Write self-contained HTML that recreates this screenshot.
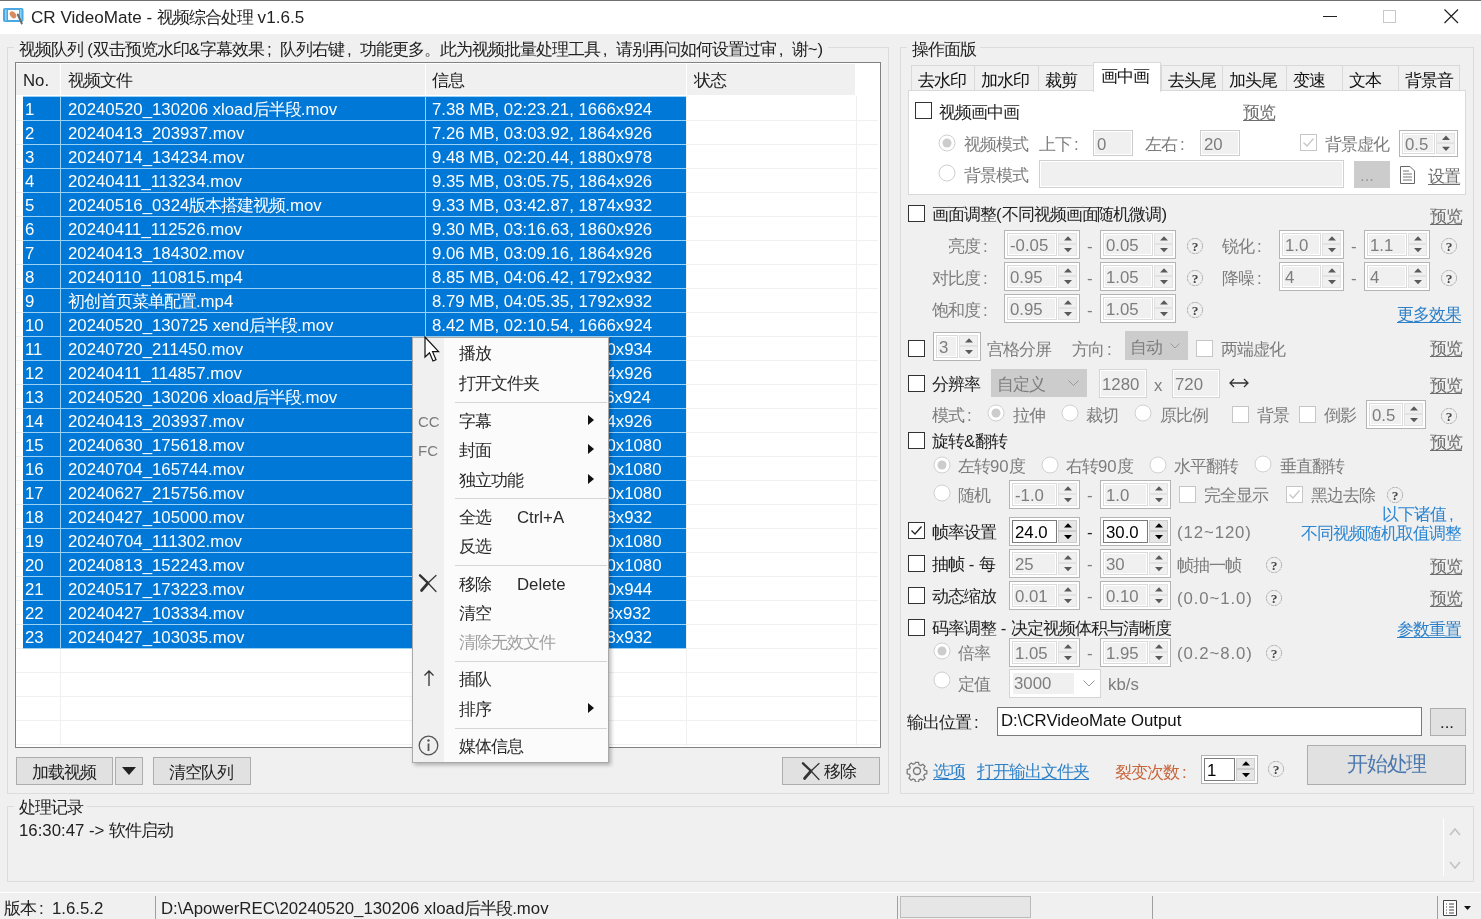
<!DOCTYPE html><html><head><meta charset="utf-8"><style>
html,body{margin:0;padding:0}
body{width:1481px;height:919px;overflow:hidden;position:relative;background:#f0f0f0;font-family:"Liberation Sans",sans-serif;font-size:16.8px;color:#1a1a1a}
.c{font-size:1.012em;letter-spacing:-0.0595em}
.k{display:inline-block;width:16px;padding-left:3px;box-sizing:border-box;letter-spacing:0}
.t{position:absolute;white-space:nowrap;line-height:20px;height:20px}
.b{position:absolute;box-sizing:content-box}
.u{text-decoration:underline;text-underline-offset:2px}
.d{color:#7d7d7d}
.w{color:#fff}
.btn{position:absolute;box-sizing:border-box;border:1px solid #adadad;background:#e1e1e1}
</style></head><body><div id="root" style="position:absolute;left:0;top:0;width:1481px;height:919px;will-change:transform">

<div class="b" style="left:0px;top:0px;width:1481px;height:34px;background:#fff"></div>
<div class="b" style="left:0px;top:0px;width:1481px;height:1px;background:#6f6f6f"></div>
<svg class="b" style="left:0px;top:4px" width="30" height="24"><rect x="3" y="4" width="20.5" height="14" rx="2" fill="#4ba7e3"/><rect x="5" y="5.5" width="1.6" height="11" fill="#86d3f6"/><rect x="20" y="5.5" width="1.6" height="11" fill="#86d3f6"/><rect x="8" y="6" width="11" height="10" fill="#f7fcff"/><ellipse cx="13" cy="10.8" rx="3.9" ry="2.7" transform="rotate(50 13 10.8)" fill="#d98a5e"/><path d="M17.8 10.5L21.8 19.5" stroke="#6a6a6a" stroke-width="1.9" stroke-linecap="round"/></svg>
<div class="t " style="left:31px;top:7px;color:#222;font-size:17.1px">CR VideoMate - <span class="c">视频综合处理</span> v1.6.5</div>
<div class="b" style="left:1323px;top:16px;width:14px;height:1px;background:#222"></div>
<div class="b" style="left:1383px;top:10px;width:11px;height:11px;border:1px solid #c8c8c8"></div>
<svg class="b" style="left:1444px;top:9px" width="15" height="15"><path d="M0.5 0.5L14 14M14 0.5L0.5 14" stroke="#222" stroke-width="1.2"/></svg>
<div class="b" style="left:7px;top:47px;width:880px;height:745px;border:1px solid #dcdcdc"></div>
<div class="t " style="left:14px;top:40px;background:#f0f0f0;color:#222">&nbsp;<span class="c">视频队列</span> (<span class="c">双击预览水印</span>&amp;<span class="c">字幕效果<span class="k">;</span>队列右键<span class="k">,</span>功能更多。此为视频批量处理工具<span class="k">,</span>请别再问如何设置过审<span class="k">,</span>谢</span>~)&nbsp;</div>
<div class="b" style="left:15px;top:62px;width:864px;height:684px;border:1px solid #828282;background:#fff"></div>
<div class="b" style="left:16px;top:64px;width:839px;height:31px;background:#f0f0f0"></div>
<div class="b" style="left:60px;top:63px;width:1px;height:33px;background:#fff"></div>
<div class="b" style="left:425px;top:63px;width:1px;height:33px;background:#fff"></div>
<div class="b" style="left:686px;top:63px;width:1px;height:33px;background:#fff"></div>
<div class="t " style="left:23px;top:71px;color:#222">No.</div>
<div class="t " style="left:68px;top:71px;color:#222"><span class="c">视频文件</span></div>
<div class="t " style="left:432px;top:71px;color:#222"><span class="c">信息</span></div>
<div class="t " style="left:694px;top:71px;color:#222"><span class="c">状态</span></div>
<div class="b" style="left:16px;top:120px;width:862px;height:1px;background:#f0f0f0"></div>
<div class="b" style="left:16px;top:144px;width:862px;height:1px;background:#f0f0f0"></div>
<div class="b" style="left:16px;top:168px;width:862px;height:1px;background:#f0f0f0"></div>
<div class="b" style="left:16px;top:192px;width:862px;height:1px;background:#f0f0f0"></div>
<div class="b" style="left:16px;top:216px;width:862px;height:1px;background:#f0f0f0"></div>
<div class="b" style="left:16px;top:240px;width:862px;height:1px;background:#f0f0f0"></div>
<div class="b" style="left:16px;top:264px;width:862px;height:1px;background:#f0f0f0"></div>
<div class="b" style="left:16px;top:288px;width:862px;height:1px;background:#f0f0f0"></div>
<div class="b" style="left:16px;top:312px;width:862px;height:1px;background:#f0f0f0"></div>
<div class="b" style="left:16px;top:336px;width:862px;height:1px;background:#f0f0f0"></div>
<div class="b" style="left:16px;top:360px;width:862px;height:1px;background:#f0f0f0"></div>
<div class="b" style="left:16px;top:384px;width:862px;height:1px;background:#f0f0f0"></div>
<div class="b" style="left:16px;top:408px;width:862px;height:1px;background:#f0f0f0"></div>
<div class="b" style="left:16px;top:432px;width:862px;height:1px;background:#f0f0f0"></div>
<div class="b" style="left:16px;top:456px;width:862px;height:1px;background:#f0f0f0"></div>
<div class="b" style="left:16px;top:480px;width:862px;height:1px;background:#f0f0f0"></div>
<div class="b" style="left:16px;top:504px;width:862px;height:1px;background:#f0f0f0"></div>
<div class="b" style="left:16px;top:528px;width:862px;height:1px;background:#f0f0f0"></div>
<div class="b" style="left:16px;top:552px;width:862px;height:1px;background:#f0f0f0"></div>
<div class="b" style="left:16px;top:576px;width:862px;height:1px;background:#f0f0f0"></div>
<div class="b" style="left:16px;top:600px;width:862px;height:1px;background:#f0f0f0"></div>
<div class="b" style="left:16px;top:624px;width:862px;height:1px;background:#f0f0f0"></div>
<div class="b" style="left:16px;top:648px;width:862px;height:1px;background:#f0f0f0"></div>
<div class="b" style="left:16px;top:672px;width:862px;height:1px;background:#f0f0f0"></div>
<div class="b" style="left:16px;top:696px;width:862px;height:1px;background:#f0f0f0"></div>
<div class="b" style="left:16px;top:720px;width:862px;height:1px;background:#f0f0f0"></div>
<div class="b" style="left:16px;top:744px;width:862px;height:1px;background:#f0f0f0"></div>
<div class="b" style="left:60px;top:96px;width:1px;height:650px;background:#f0f0f0"></div>
<div class="b" style="left:425px;top:96px;width:1px;height:650px;background:#f0f0f0"></div>
<div class="b" style="left:686px;top:96px;width:1px;height:650px;background:#f0f0f0"></div>
<div class="b" style="left:856px;top:96px;width:1px;height:650px;background:#f0f0f0"></div>
<div class="b" style="left:23px;top:96px;width:663px;height:24px;background:#0078d7"></div>
<div class="b" style="left:23px;top:96px;width:663px;height:1px;background:#99d1f5"></div>
<div class="b" style="left:60px;top:96px;width:1px;height:24px;background:#99d1f5"></div>
<div class="b" style="left:425px;top:96px;width:1px;height:24px;background:#99d1f5"></div>
<div class="t w" style="left:25px;top:100px;">1</div>
<div class="t w" style="left:68px;top:100px;">20240520_130206 xload<span class="c">后半段</span>.mov</div>
<div class="t w" style="left:432px;top:100px;">7.38 MB, 02:23.21, 1666x924</div>
<div class="b" style="left:23px;top:120px;width:663px;height:24px;background:#0078d7"></div>
<div class="b" style="left:23px;top:120px;width:663px;height:1px;background:#99d1f5"></div>
<div class="b" style="left:60px;top:120px;width:1px;height:24px;background:#99d1f5"></div>
<div class="b" style="left:425px;top:120px;width:1px;height:24px;background:#99d1f5"></div>
<div class="t w" style="left:25px;top:124px;">2</div>
<div class="t w" style="left:68px;top:124px;">20240413_203937.mov</div>
<div class="t w" style="left:432px;top:124px;">7.26 MB, 03:03.92, 1864x926</div>
<div class="b" style="left:23px;top:144px;width:663px;height:24px;background:#0078d7"></div>
<div class="b" style="left:23px;top:144px;width:663px;height:1px;background:#99d1f5"></div>
<div class="b" style="left:60px;top:144px;width:1px;height:24px;background:#99d1f5"></div>
<div class="b" style="left:425px;top:144px;width:1px;height:24px;background:#99d1f5"></div>
<div class="t w" style="left:25px;top:148px;">3</div>
<div class="t w" style="left:68px;top:148px;">20240714_134234.mov</div>
<div class="t w" style="left:432px;top:148px;">9.48 MB, 02:20.44, 1880x978</div>
<div class="b" style="left:23px;top:168px;width:663px;height:24px;background:#0078d7"></div>
<div class="b" style="left:23px;top:168px;width:663px;height:1px;background:#99d1f5"></div>
<div class="b" style="left:60px;top:168px;width:1px;height:24px;background:#99d1f5"></div>
<div class="b" style="left:425px;top:168px;width:1px;height:24px;background:#99d1f5"></div>
<div class="t w" style="left:25px;top:172px;">4</div>
<div class="t w" style="left:68px;top:172px;">20240411_113234.mov</div>
<div class="t w" style="left:432px;top:172px;">9.35 MB, 03:05.75, 1864x926</div>
<div class="b" style="left:23px;top:192px;width:663px;height:24px;background:#0078d7"></div>
<div class="b" style="left:23px;top:192px;width:663px;height:1px;background:#99d1f5"></div>
<div class="b" style="left:60px;top:192px;width:1px;height:24px;background:#99d1f5"></div>
<div class="b" style="left:425px;top:192px;width:1px;height:24px;background:#99d1f5"></div>
<div class="t w" style="left:25px;top:196px;">5</div>
<div class="t w" style="left:68px;top:196px;">20240516_0324<span class="c">版本搭建视频</span>.mov</div>
<div class="t w" style="left:432px;top:196px;">9.33 MB, 03:42.87, 1874x932</div>
<div class="b" style="left:23px;top:216px;width:663px;height:24px;background:#0078d7"></div>
<div class="b" style="left:23px;top:216px;width:663px;height:1px;background:#99d1f5"></div>
<div class="b" style="left:60px;top:216px;width:1px;height:24px;background:#99d1f5"></div>
<div class="b" style="left:425px;top:216px;width:1px;height:24px;background:#99d1f5"></div>
<div class="t w" style="left:25px;top:220px;">6</div>
<div class="t w" style="left:68px;top:220px;">20240411_112526.mov</div>
<div class="t w" style="left:432px;top:220px;">9.30 MB, 03:16.63, 1860x926</div>
<div class="b" style="left:23px;top:240px;width:663px;height:24px;background:#0078d7"></div>
<div class="b" style="left:23px;top:240px;width:663px;height:1px;background:#99d1f5"></div>
<div class="b" style="left:60px;top:240px;width:1px;height:24px;background:#99d1f5"></div>
<div class="b" style="left:425px;top:240px;width:1px;height:24px;background:#99d1f5"></div>
<div class="t w" style="left:25px;top:244px;">7</div>
<div class="t w" style="left:68px;top:244px;">20240413_184302.mov</div>
<div class="t w" style="left:432px;top:244px;">9.06 MB, 03:09.16, 1864x926</div>
<div class="b" style="left:23px;top:264px;width:663px;height:24px;background:#0078d7"></div>
<div class="b" style="left:23px;top:264px;width:663px;height:1px;background:#99d1f5"></div>
<div class="b" style="left:60px;top:264px;width:1px;height:24px;background:#99d1f5"></div>
<div class="b" style="left:425px;top:264px;width:1px;height:24px;background:#99d1f5"></div>
<div class="t w" style="left:25px;top:268px;">8</div>
<div class="t w" style="left:68px;top:268px;">20240110_110815.mp4</div>
<div class="t w" style="left:432px;top:268px;">8.85 MB, 04:06.42, 1792x932</div>
<div class="b" style="left:23px;top:288px;width:663px;height:24px;background:#0078d7"></div>
<div class="b" style="left:23px;top:288px;width:663px;height:1px;background:#99d1f5"></div>
<div class="b" style="left:60px;top:288px;width:1px;height:24px;background:#99d1f5"></div>
<div class="b" style="left:425px;top:288px;width:1px;height:24px;background:#99d1f5"></div>
<div class="t w" style="left:25px;top:292px;">9</div>
<div class="t w" style="left:68px;top:292px;"><span class="c">初创首页菜单配置</span>.mp4</div>
<div class="t w" style="left:432px;top:292px;">8.79 MB, 04:05.35, 1792x932</div>
<div class="b" style="left:23px;top:312px;width:663px;height:24px;background:#0078d7"></div>
<div class="b" style="left:23px;top:312px;width:663px;height:1px;background:#99d1f5"></div>
<div class="b" style="left:60px;top:312px;width:1px;height:24px;background:#99d1f5"></div>
<div class="b" style="left:425px;top:312px;width:1px;height:24px;background:#99d1f5"></div>
<div class="t w" style="left:25px;top:316px;">10</div>
<div class="t w" style="left:68px;top:316px;">20240520_130725 xend<span class="c">后半段</span>.mov</div>
<div class="t w" style="left:432px;top:316px;">8.42 MB, 02:10.54, 1666x924</div>
<div class="b" style="left:23px;top:336px;width:663px;height:24px;background:#0078d7"></div>
<div class="b" style="left:23px;top:336px;width:663px;height:1px;background:#99d1f5"></div>
<div class="b" style="left:60px;top:336px;width:1px;height:24px;background:#99d1f5"></div>
<div class="b" style="left:425px;top:336px;width:1px;height:24px;background:#99d1f5"></div>
<div class="t w" style="left:25px;top:340px;">11</div>
<div class="t w" style="left:68px;top:340px;">20240720_211450.mov</div>
<div class="t w" style="left:432px;top:340px;">8.31 MB, 02:45.12, 1680x934</div>
<div class="b" style="left:23px;top:360px;width:663px;height:24px;background:#0078d7"></div>
<div class="b" style="left:23px;top:360px;width:663px;height:1px;background:#99d1f5"></div>
<div class="b" style="left:60px;top:360px;width:1px;height:24px;background:#99d1f5"></div>
<div class="b" style="left:425px;top:360px;width:1px;height:24px;background:#99d1f5"></div>
<div class="t w" style="left:25px;top:364px;">12</div>
<div class="t w" style="left:68px;top:364px;">20240411_114857.mov</div>
<div class="t w" style="left:432px;top:364px;">8.20 MB, 03:01.08, 1864x926</div>
<div class="b" style="left:23px;top:384px;width:663px;height:24px;background:#0078d7"></div>
<div class="b" style="left:23px;top:384px;width:663px;height:1px;background:#99d1f5"></div>
<div class="b" style="left:60px;top:384px;width:1px;height:24px;background:#99d1f5"></div>
<div class="b" style="left:425px;top:384px;width:1px;height:24px;background:#99d1f5"></div>
<div class="t w" style="left:25px;top:388px;">13</div>
<div class="t w" style="left:68px;top:388px;">20240520_130206 xload<span class="c">后半段</span>.mov</div>
<div class="t w" style="left:432px;top:388px;">8.11 MB, 02:23.21, 1666x924</div>
<div class="b" style="left:23px;top:408px;width:663px;height:24px;background:#0078d7"></div>
<div class="b" style="left:23px;top:408px;width:663px;height:1px;background:#99d1f5"></div>
<div class="b" style="left:60px;top:408px;width:1px;height:24px;background:#99d1f5"></div>
<div class="b" style="left:425px;top:408px;width:1px;height:24px;background:#99d1f5"></div>
<div class="t w" style="left:25px;top:412px;">14</div>
<div class="t w" style="left:68px;top:412px;">20240413_203937.mov</div>
<div class="t w" style="left:432px;top:412px;">8.05 MB, 03:03.92, 1864x926</div>
<div class="b" style="left:23px;top:432px;width:663px;height:24px;background:#0078d7"></div>
<div class="b" style="left:23px;top:432px;width:663px;height:1px;background:#99d1f5"></div>
<div class="b" style="left:60px;top:432px;width:1px;height:24px;background:#99d1f5"></div>
<div class="b" style="left:425px;top:432px;width:1px;height:24px;background:#99d1f5"></div>
<div class="t w" style="left:25px;top:436px;">15</div>
<div class="t w" style="left:68px;top:436px;">20240630_175618.mov</div>
<div class="t w" style="left:432px;top:436px;">7.98 MB, 01:58.30, 1920x1080</div>
<div class="b" style="left:23px;top:456px;width:663px;height:24px;background:#0078d7"></div>
<div class="b" style="left:23px;top:456px;width:663px;height:1px;background:#99d1f5"></div>
<div class="b" style="left:60px;top:456px;width:1px;height:24px;background:#99d1f5"></div>
<div class="b" style="left:425px;top:456px;width:1px;height:24px;background:#99d1f5"></div>
<div class="t w" style="left:25px;top:460px;">16</div>
<div class="t w" style="left:68px;top:460px;">20240704_165744.mov</div>
<div class="t w" style="left:432px;top:460px;">7.91 MB, 02:12.47, 1920x1080</div>
<div class="b" style="left:23px;top:480px;width:663px;height:24px;background:#0078d7"></div>
<div class="b" style="left:23px;top:480px;width:663px;height:1px;background:#99d1f5"></div>
<div class="b" style="left:60px;top:480px;width:1px;height:24px;background:#99d1f5"></div>
<div class="b" style="left:425px;top:480px;width:1px;height:24px;background:#99d1f5"></div>
<div class="t w" style="left:25px;top:484px;">17</div>
<div class="t w" style="left:68px;top:484px;">20240627_215756.mov</div>
<div class="t w" style="left:432px;top:484px;">7.88 MB, 02:31.66, 1920x1080</div>
<div class="b" style="left:23px;top:504px;width:663px;height:24px;background:#0078d7"></div>
<div class="b" style="left:23px;top:504px;width:663px;height:1px;background:#99d1f5"></div>
<div class="b" style="left:60px;top:504px;width:1px;height:24px;background:#99d1f5"></div>
<div class="b" style="left:425px;top:504px;width:1px;height:24px;background:#99d1f5"></div>
<div class="t w" style="left:25px;top:508px;">18</div>
<div class="t w" style="left:68px;top:508px;">20240427_105000.mov</div>
<div class="t w" style="left:432px;top:508px;">7.80 MB, 03:22.15, 1868x932</div>
<div class="b" style="left:23px;top:528px;width:663px;height:24px;background:#0078d7"></div>
<div class="b" style="left:23px;top:528px;width:663px;height:1px;background:#99d1f5"></div>
<div class="b" style="left:60px;top:528px;width:1px;height:24px;background:#99d1f5"></div>
<div class="b" style="left:425px;top:528px;width:1px;height:24px;background:#99d1f5"></div>
<div class="t w" style="left:25px;top:532px;">19</div>
<div class="t w" style="left:68px;top:532px;">20240704_111302.mov</div>
<div class="t w" style="left:432px;top:532px;">7.74 MB, 02:05.09, 1920x1080</div>
<div class="b" style="left:23px;top:552px;width:663px;height:24px;background:#0078d7"></div>
<div class="b" style="left:23px;top:552px;width:663px;height:1px;background:#99d1f5"></div>
<div class="b" style="left:60px;top:552px;width:1px;height:24px;background:#99d1f5"></div>
<div class="b" style="left:425px;top:552px;width:1px;height:24px;background:#99d1f5"></div>
<div class="t w" style="left:25px;top:556px;">20</div>
<div class="t w" style="left:68px;top:556px;">20240813_152243.mov</div>
<div class="t w" style="left:432px;top:556px;">7.69 MB, 01:49.73, 1920x1080</div>
<div class="b" style="left:23px;top:576px;width:663px;height:24px;background:#0078d7"></div>
<div class="b" style="left:23px;top:576px;width:663px;height:1px;background:#99d1f5"></div>
<div class="b" style="left:60px;top:576px;width:1px;height:24px;background:#99d1f5"></div>
<div class="b" style="left:425px;top:576px;width:1px;height:24px;background:#99d1f5"></div>
<div class="t w" style="left:25px;top:580px;">21</div>
<div class="t w" style="left:68px;top:580px;">20240517_173223.mov</div>
<div class="t w" style="left:432px;top:580px;">7.61 MB, 02:40.28, 1880x944</div>
<div class="b" style="left:23px;top:600px;width:663px;height:24px;background:#0078d7"></div>
<div class="b" style="left:23px;top:600px;width:663px;height:1px;background:#99d1f5"></div>
<div class="b" style="left:60px;top:600px;width:1px;height:24px;background:#99d1f5"></div>
<div class="b" style="left:425px;top:600px;width:1px;height:24px;background:#99d1f5"></div>
<div class="t w" style="left:25px;top:604px;">22</div>
<div class="t w" style="left:68px;top:604px;">20240427_103334.mov</div>
<div class="t w" style="left:432px;top:604px;">7.55 MB, 03:11.90, 1868x932</div>
<div class="b" style="left:23px;top:624px;width:663px;height:24px;background:#0078d7"></div>
<div class="b" style="left:23px;top:624px;width:663px;height:1px;background:#99d1f5"></div>
<div class="b" style="left:60px;top:624px;width:1px;height:24px;background:#99d1f5"></div>
<div class="b" style="left:425px;top:624px;width:1px;height:24px;background:#99d1f5"></div>
<div class="t w" style="left:25px;top:628px;">23</div>
<div class="t w" style="left:68px;top:628px;">20240427_103035.mov</div>
<div class="t w" style="left:432px;top:628px;">7.50 MB, 03:08.44, 1868x932</div>
<div class="b" style="left:23px;top:648px;width:663px;height:1px;background:#99d1f5"></div>
<div class="btn" style="left:16px;top:757px;width:97px;height:28px"></div>
<div class="t " style="left:32px;top:763px;color:#222"><span class="c">加载视频</span></div>
<div class="btn" style="left:115px;top:757px;width:28px;height:28px"></div>
<svg class="b" style="left:122px;top:767px" width="14" height="9"><path d="M0 0H14L7 8Z" fill="#222"/></svg>
<div class="btn" style="left:153px;top:757px;width:98px;height:28px"></div>
<div class="t " style="left:169px;top:763px;color:#222"><span class="c">清空队列</span></div>
<div class="btn" style="left:782px;top:757px;width:98px;height:28px"></div>
<svg class="b" style="left:801px;top:761px" width="20" height="20"><g stroke="#333" stroke-linecap="round"><path d="M2 2.3L10 10" stroke-width="2.4"/><path d="M10 10L18 18.5" stroke-width="1.2"/><path d="M3.5 17.5L10 10" stroke-width="2.7"/><path d="M10 10L18 2.5" stroke-width="1.2"/></g></svg>
<div class="t " style="left:824px;top:762px;color:#222"><span class="c">移除</span></div>
<div class="b" style="left:900px;top:47px;width:572px;height:745px;border:1px solid #dcdcdc"></div>
<div class="t " style="left:907px;top:40px;background:#f0f0f0;color:#222">&nbsp;<span class="c">操作面版</span>&nbsp;</div>
<div class="b" style="left:908px;top:90px;width:556px;height:103px;border:1px solid #d9d9d9;background:#fff"></div>
<div class="b" style="left:911px;top:65px;width:62px;height:24px;border:1px solid #d9d9d9;border-bottom:none;background:#f0f0f0"></div>
<div class="t " style="left:918px;top:71px;color:#111"><span class="c">去水印</span></div>
<div class="b" style="left:974px;top:65px;width:63px;height:24px;border:1px solid #d9d9d9;border-bottom:none;background:#f0f0f0"></div>
<div class="t " style="left:981px;top:71px;color:#111"><span class="c">加水印</span></div>
<div class="b" style="left:1038px;top:65px;width:54px;height:24px;border:1px solid #d9d9d9;border-bottom:none;background:#f0f0f0"></div>
<div class="t " style="left:1045px;top:71px;color:#111"><span class="c">裁剪</span></div>
<div class="b" style="left:1161px;top:65px;width:60px;height:24px;border:1px solid #d9d9d9;border-bottom:none;background:#f0f0f0"></div>
<div class="t " style="left:1168px;top:71px;color:#111"><span class="c">去头尾</span></div>
<div class="b" style="left:1222px;top:65px;width:63px;height:24px;border:1px solid #d9d9d9;border-bottom:none;background:#f0f0f0"></div>
<div class="t " style="left:1229px;top:71px;color:#111"><span class="c">加头尾</span></div>
<div class="b" style="left:1286px;top:65px;width:55px;height:24px;border:1px solid #d9d9d9;border-bottom:none;background:#f0f0f0"></div>
<div class="t " style="left:1293px;top:71px;color:#111"><span class="c">变速</span></div>
<div class="b" style="left:1342px;top:65px;width:55px;height:24px;border:1px solid #d9d9d9;border-bottom:none;background:#f0f0f0"></div>
<div class="t " style="left:1349px;top:71px;color:#111"><span class="c">文本</span></div>
<div class="b" style="left:1398px;top:65px;width:60px;height:24px;border:1px solid #d9d9d9;border-bottom:none;background:#f0f0f0"></div>
<div class="t " style="left:1405px;top:71px;color:#111"><span class="c">背景音</span></div>
<div class="b" style="left:1093px;top:62px;width:66px;height:29px;border:1px solid #d9d9d9;border-bottom:none;background:#fff"></div>
<div class="t " style="left:1101px;top:67px;color:#111"><span class="c">画中画</span></div>
<div class="b" style="left:915px;top:102px;width:15px;height:15px;border:1px solid #333;background:#fff"></div>
<div class="t " style="left:939px;top:103px;color:#222"><span class="c">视频画中画</span></div>
<div class="t u" style="left:1243px;top:103px;color:#6d6d6d"><span class="c">预览</span></div>
<svg class="b" style="left:938px;top:134px" width="18" height="18"><circle cx="9" cy="9" r="8" fill="#fff" stroke="#cfcfcf" stroke-width="1"/><circle cx="9" cy="9" r="4.5" fill="#cccccc"/></svg>
<div class="t d" style="left:964px;top:135px;"><span class="c">视频模式</span></div>
<div class="t d" style="left:1039px;top:135px;"><span class="c">上下<span class="k">:</span></span></div>
<div class="b" style="left:1093px;top:130px;width:38px;height:24px;border:1px solid #cccccc;box-shadow:inset 0 0 0 1px #fff;background:#f0f0f0"></div>
<div class="t d" style="left:1097px;top:135px;">0</div>
<div class="t d" style="left:1145px;top:135px;"><span class="c">左右<span class="k">:</span></span></div>
<div class="b" style="left:1200px;top:130px;width:38px;height:24px;border:1px solid #cccccc;box-shadow:inset 0 0 0 1px #fff;background:#f0f0f0"></div>
<div class="t d" style="left:1204px;top:135px;">20</div>
<div class="b" style="left:1300px;top:134px;width:15px;height:15px;border:1px solid #c6c6c6;background:#fff"></div>
<svg class="b" style="left:1300px;top:134px" width="17" height="17"><path d="M3.5 8.5 L7 12 L13.5 4.5" fill="none" stroke="#c6c6c6" stroke-width="1.3"/></svg>
<div class="t d" style="left:1325px;top:135px;"><span class="c">背景虚化</span></div>
<div class="b" style="left:1399px;top:130px;width:57px;height:25px;border:1px solid #b4b4b4;background:#fff"></div>
<div class="b" style="left:1402px;top:133px;width:31px;height:19px;border:1px solid #dadada;box-shadow:inset 0 0 0 1px #fff;background:#f0f0f0"></div>
<div class="b" style="left:1436px;top:133px;width:17px;height:19px;border:1px solid #e2e2e2;background:#f0f0f0"></div>
<div class="b" style="left:1436px;top:142px;width:19px;height:2px;background:#e2e2e2"></div>
<svg class="b" style="left:1440.5px;top:133px" width="10" height="21"><path d="M1 6.9L5 2.6L9 6.9Z" fill="#5a5a5a"/><path d="M1 13.7L5 17.9L9 13.7Z" fill="#5a5a5a"/></svg>
<div class="t " style="left:1405px;top:135px;color:#7d7d7d">0.5</div>
<svg class="b" style="left:938px;top:164px" width="18" height="18"><circle cx="9" cy="9" r="8" fill="#fff" stroke="#cfcfcf" stroke-width="1"/></svg>
<div class="t d" style="left:964px;top:166px;"><span class="c">背景模式</span></div>
<div class="b" style="left:1039px;top:160px;width:303px;height:26px;border:1px solid #d0d0d0;box-shadow:inset 0 0 0 1px #fff;background:#f0f0f0"></div>
<div class="b" style="left:1354px;top:161px;width:36px;height:27px;background:#cccccc"></div>
<div class="t " style="left:1360px;top:166px;color:#999">...</div>
<svg class="b" style="left:1399px;top:165px" width="17" height="20"><path d="M1.5 1.5H11L15.5 6V18.5H1.5Z" fill="#fff" stroke="#666"/><path d="M4 6H10M4 9H13M4 12H13M4 15H13" stroke="#777"/></svg>
<div class="t u" style="left:1428px;top:167px;color:#6d6d6d"><span class="c">设置</span></div>
<div class="b" style="left:908px;top:205px;width:15px;height:15px;border:1px solid #333;background:#fff"></div>
<div class="t " style="left:932px;top:205px;color:#222"><span class="c">画面调整</span>(<span class="c">不同视频画面随机微调</span>)</div>
<div class="t u" style="left:1430px;top:207px;color:#6d6d6d"><span class="c">预览</span></div>
<div class="t d" style="left:948px;top:237px;"><span class="c">亮度<span class="k">:</span></span></div>
<div class="b" style="left:1004px;top:230px;width:74px;height:27px;border:1px solid #b4b4b4;background:#fff"></div>
<div class="b" style="left:1007px;top:233px;width:48px;height:21px;border:1px solid #dadada;box-shadow:inset 0 0 0 1px #fff;background:#f0f0f0"></div>
<div class="b" style="left:1058px;top:233px;width:17px;height:21px;border:1px solid #e2e2e2;background:#f0f0f0"></div>
<div class="b" style="left:1058px;top:243px;width:19px;height:2px;background:#e2e2e2"></div>
<svg class="b" style="left:1062.5px;top:233px" width="10" height="23"><path d="M1 7.6L5 3.3L9 7.6Z" fill="#5a5a5a"/><path d="M1 15.0L5 19.2L9 15.0Z" fill="#5a5a5a"/></svg>
<div class="t " style="left:1010px;top:236px;color:#7d7d7d">-0.05</div>
<div class="t d" style="left:1087px;top:237px;">-</div>
<div class="b" style="left:1100px;top:230px;width:74px;height:27px;border:1px solid #b4b4b4;background:#fff"></div>
<div class="b" style="left:1103px;top:233px;width:48px;height:21px;border:1px solid #dadada;box-shadow:inset 0 0 0 1px #fff;background:#f0f0f0"></div>
<div class="b" style="left:1154px;top:233px;width:17px;height:21px;border:1px solid #e2e2e2;background:#f0f0f0"></div>
<div class="b" style="left:1154px;top:243px;width:19px;height:2px;background:#e2e2e2"></div>
<svg class="b" style="left:1158.5px;top:233px" width="10" height="23"><path d="M1 7.6L5 3.3L9 7.6Z" fill="#5a5a5a"/><path d="M1 15.0L5 19.2L9 15.0Z" fill="#5a5a5a"/></svg>
<div class="t " style="left:1106px;top:236px;color:#7d7d7d">0.05</div>
<svg class="b" style="left:1186px;top:237px" width="18" height="18"><circle cx="9" cy="9" r="7.6" fill="none" stroke="#b0b0b0" stroke-width="1" stroke-dasharray="3.2 0.8"/><text x="9" y="14" text-anchor="middle" font-family="Liberation Serif" font-weight="bold" font-size="13.5" fill="#4a4a4a">?</text></svg>
<div class="t d" style="left:932px;top:269px;"><span class="c">对比度<span class="k">:</span></span></div>
<div class="b" style="left:1004px;top:262px;width:74px;height:27px;border:1px solid #b4b4b4;background:#fff"></div>
<div class="b" style="left:1007px;top:265px;width:48px;height:21px;border:1px solid #dadada;box-shadow:inset 0 0 0 1px #fff;background:#f0f0f0"></div>
<div class="b" style="left:1058px;top:265px;width:17px;height:21px;border:1px solid #e2e2e2;background:#f0f0f0"></div>
<div class="b" style="left:1058px;top:275px;width:19px;height:2px;background:#e2e2e2"></div>
<svg class="b" style="left:1062.5px;top:265px" width="10" height="23"><path d="M1 7.6L5 3.3L9 7.6Z" fill="#5a5a5a"/><path d="M1 15.0L5 19.2L9 15.0Z" fill="#5a5a5a"/></svg>
<div class="t " style="left:1010px;top:268px;color:#7d7d7d">0.95</div>
<div class="t d" style="left:1087px;top:269px;">-</div>
<div class="b" style="left:1100px;top:262px;width:74px;height:27px;border:1px solid #b4b4b4;background:#fff"></div>
<div class="b" style="left:1103px;top:265px;width:48px;height:21px;border:1px solid #dadada;box-shadow:inset 0 0 0 1px #fff;background:#f0f0f0"></div>
<div class="b" style="left:1154px;top:265px;width:17px;height:21px;border:1px solid #e2e2e2;background:#f0f0f0"></div>
<div class="b" style="left:1154px;top:275px;width:19px;height:2px;background:#e2e2e2"></div>
<svg class="b" style="left:1158.5px;top:265px" width="10" height="23"><path d="M1 7.6L5 3.3L9 7.6Z" fill="#5a5a5a"/><path d="M1 15.0L5 19.2L9 15.0Z" fill="#5a5a5a"/></svg>
<div class="t " style="left:1106px;top:268px;color:#7d7d7d">1.05</div>
<svg class="b" style="left:1186px;top:269px" width="18" height="18"><circle cx="9" cy="9" r="7.6" fill="none" stroke="#b0b0b0" stroke-width="1" stroke-dasharray="3.2 0.8"/><text x="9" y="14" text-anchor="middle" font-family="Liberation Serif" font-weight="bold" font-size="13.5" fill="#4a4a4a">?</text></svg>
<div class="t d" style="left:932px;top:301px;"><span class="c">饱和度<span class="k">:</span></span></div>
<div class="b" style="left:1004px;top:294px;width:74px;height:27px;border:1px solid #b4b4b4;background:#fff"></div>
<div class="b" style="left:1007px;top:297px;width:48px;height:21px;border:1px solid #dadada;box-shadow:inset 0 0 0 1px #fff;background:#f0f0f0"></div>
<div class="b" style="left:1058px;top:297px;width:17px;height:21px;border:1px solid #e2e2e2;background:#f0f0f0"></div>
<div class="b" style="left:1058px;top:307px;width:19px;height:2px;background:#e2e2e2"></div>
<svg class="b" style="left:1062.5px;top:297px" width="10" height="23"><path d="M1 7.6L5 3.3L9 7.6Z" fill="#5a5a5a"/><path d="M1 15.0L5 19.2L9 15.0Z" fill="#5a5a5a"/></svg>
<div class="t " style="left:1010px;top:300px;color:#7d7d7d">0.95</div>
<div class="t d" style="left:1087px;top:301px;">-</div>
<div class="b" style="left:1100px;top:294px;width:74px;height:27px;border:1px solid #b4b4b4;background:#fff"></div>
<div class="b" style="left:1103px;top:297px;width:48px;height:21px;border:1px solid #dadada;box-shadow:inset 0 0 0 1px #fff;background:#f0f0f0"></div>
<div class="b" style="left:1154px;top:297px;width:17px;height:21px;border:1px solid #e2e2e2;background:#f0f0f0"></div>
<div class="b" style="left:1154px;top:307px;width:19px;height:2px;background:#e2e2e2"></div>
<svg class="b" style="left:1158.5px;top:297px" width="10" height="23"><path d="M1 7.6L5 3.3L9 7.6Z" fill="#5a5a5a"/><path d="M1 15.0L5 19.2L9 15.0Z" fill="#5a5a5a"/></svg>
<div class="t " style="left:1106px;top:300px;color:#7d7d7d">1.05</div>
<svg class="b" style="left:1186px;top:301px" width="18" height="18"><circle cx="9" cy="9" r="7.6" fill="none" stroke="#b0b0b0" stroke-width="1" stroke-dasharray="3.2 0.8"/><text x="9" y="14" text-anchor="middle" font-family="Liberation Serif" font-weight="bold" font-size="13.5" fill="#4a4a4a">?</text></svg>
<div class="t d" style="left:1222px;top:237px;"><span class="c">锐化<span class="k">:</span></span></div>
<div class="b" style="left:1279px;top:230px;width:63px;height:27px;border:1px solid #b4b4b4;background:#fff"></div>
<div class="b" style="left:1282px;top:233px;width:37px;height:21px;border:1px solid #dadada;box-shadow:inset 0 0 0 1px #fff;background:#f0f0f0"></div>
<div class="b" style="left:1322px;top:233px;width:17px;height:21px;border:1px solid #e2e2e2;background:#f0f0f0"></div>
<div class="b" style="left:1322px;top:243px;width:19px;height:2px;background:#e2e2e2"></div>
<svg class="b" style="left:1326.5px;top:233px" width="10" height="23"><path d="M1 7.6L5 3.3L9 7.6Z" fill="#5a5a5a"/><path d="M1 15.0L5 19.2L9 15.0Z" fill="#5a5a5a"/></svg>
<div class="t " style="left:1285px;top:236px;color:#7d7d7d">1.0</div>
<div class="t d" style="left:1351px;top:237px;">-</div>
<div class="b" style="left:1364px;top:230px;width:64px;height:27px;border:1px solid #b4b4b4;background:#fff"></div>
<div class="b" style="left:1367px;top:233px;width:38px;height:21px;border:1px solid #dadada;box-shadow:inset 0 0 0 1px #fff;background:#f0f0f0"></div>
<div class="b" style="left:1408px;top:233px;width:17px;height:21px;border:1px solid #e2e2e2;background:#f0f0f0"></div>
<div class="b" style="left:1408px;top:243px;width:19px;height:2px;background:#e2e2e2"></div>
<svg class="b" style="left:1412.5px;top:233px" width="10" height="23"><path d="M1 7.6L5 3.3L9 7.6Z" fill="#5a5a5a"/><path d="M1 15.0L5 19.2L9 15.0Z" fill="#5a5a5a"/></svg>
<div class="t " style="left:1370px;top:236px;color:#7d7d7d">1.1</div>
<svg class="b" style="left:1440px;top:237px" width="18" height="18"><circle cx="9" cy="9" r="7.6" fill="none" stroke="#b0b0b0" stroke-width="1" stroke-dasharray="3.2 0.8"/><text x="9" y="14" text-anchor="middle" font-family="Liberation Serif" font-weight="bold" font-size="13.5" fill="#4a4a4a">?</text></svg>
<div class="t d" style="left:1222px;top:269px;"><span class="c">降噪<span class="k">:</span></span></div>
<div class="b" style="left:1279px;top:262px;width:63px;height:27px;border:1px solid #b4b4b4;background:#fff"></div>
<div class="b" style="left:1282px;top:265px;width:37px;height:21px;border:1px solid #dadada;box-shadow:inset 0 0 0 1px #fff;background:#f0f0f0"></div>
<div class="b" style="left:1322px;top:265px;width:17px;height:21px;border:1px solid #e2e2e2;background:#f0f0f0"></div>
<div class="b" style="left:1322px;top:275px;width:19px;height:2px;background:#e2e2e2"></div>
<svg class="b" style="left:1326.5px;top:265px" width="10" height="23"><path d="M1 7.6L5 3.3L9 7.6Z" fill="#5a5a5a"/><path d="M1 15.0L5 19.2L9 15.0Z" fill="#5a5a5a"/></svg>
<div class="t " style="left:1285px;top:268px;color:#7d7d7d">4</div>
<div class="t d" style="left:1351px;top:269px;">-</div>
<div class="b" style="left:1364px;top:262px;width:64px;height:27px;border:1px solid #b4b4b4;background:#fff"></div>
<div class="b" style="left:1367px;top:265px;width:38px;height:21px;border:1px solid #dadada;box-shadow:inset 0 0 0 1px #fff;background:#f0f0f0"></div>
<div class="b" style="left:1408px;top:265px;width:17px;height:21px;border:1px solid #e2e2e2;background:#f0f0f0"></div>
<div class="b" style="left:1408px;top:275px;width:19px;height:2px;background:#e2e2e2"></div>
<svg class="b" style="left:1412.5px;top:265px" width="10" height="23"><path d="M1 7.6L5 3.3L9 7.6Z" fill="#5a5a5a"/><path d="M1 15.0L5 19.2L9 15.0Z" fill="#5a5a5a"/></svg>
<div class="t " style="left:1370px;top:268px;color:#7d7d7d">4</div>
<svg class="b" style="left:1440px;top:269px" width="18" height="18"><circle cx="9" cy="9" r="7.6" fill="none" stroke="#b0b0b0" stroke-width="1" stroke-dasharray="3.2 0.8"/><text x="9" y="14" text-anchor="middle" font-family="Liberation Serif" font-weight="bold" font-size="13.5" fill="#4a4a4a">?</text></svg>
<div class="t u" style="left:1397px;top:305px;color:#2d80c8"><span class="c">更多效果</span></div>
<div class="b" style="left:908px;top:340px;width:15px;height:15px;border:1px solid #333;background:#fff"></div>
<div class="b" style="left:933px;top:332px;width:46px;height:27px;border:1px solid #b4b4b4;background:#fff"></div>
<div class="b" style="left:936px;top:335px;width:20px;height:21px;border:1px solid #dadada;box-shadow:inset 0 0 0 1px #fff;background:#f0f0f0"></div>
<div class="b" style="left:959px;top:335px;width:17px;height:21px;border:1px solid #e2e2e2;background:#f0f0f0"></div>
<div class="b" style="left:959px;top:345px;width:19px;height:2px;background:#e2e2e2"></div>
<svg class="b" style="left:963.5px;top:335px" width="10" height="23"><path d="M1 7.6L5 3.3L9 7.6Z" fill="#5a5a5a"/><path d="M1 15.0L5 19.2L9 15.0Z" fill="#5a5a5a"/></svg>
<div class="t " style="left:939px;top:338px;color:#7d7d7d">3</div>
<div class="t d" style="left:987px;top:340px;"><span class="c">宫格分屏</span></div>
<div class="t d" style="left:1072px;top:340px;"><span class="c">方向<span class="k">:</span></span></div>
<div class="b" style="left:1125px;top:331px;width:63px;height:29px;background:#cccccc"></div>
<div class="t d" style="left:1130px;top:338px;"><span class="c">自动</span></div>
<svg class="b" style="left:1170px;top:343px" width="10" height="6"><path d="M0.5 0.5L5 5L9.5 0.5" fill="none" stroke="#999"/></svg>
<div class="b" style="left:1196px;top:340px;width:15px;height:15px;border:1px solid #c6c6c6;background:#fff"></div>
<div class="t d" style="left:1221px;top:340px;"><span class="c">两端虚化</span></div>
<div class="t u" style="left:1430px;top:339px;color:#6d6d6d"><span class="c">预览</span></div>
<div class="b" style="left:908px;top:375px;width:15px;height:15px;border:1px solid #333;background:#fff"></div>
<div class="t " style="left:932px;top:375px;color:#222"><span class="c">分辨率</span></div>
<div class="b" style="left:991px;top:369px;width:96px;height:28px;background:#cccccc"></div>
<div class="t d" style="left:997px;top:375px;"><span class="c">自定义</span></div>
<svg class="b" style="left:1068px;top:380px" width="11" height="7"><path d="M0.5 0.5L5.5 5.5L10.5 0.5" fill="none" stroke="#999"/></svg>
<div class="b" style="left:1099px;top:369px;width:46px;height:27px;border:1px solid #d5d5d5;box-shadow:inset 0 0 0 1px #fff;background:#f0f0f0"></div>
<div class="t d" style="left:1102px;top:375px;">1280</div>
<div class="t d" style="left:1154px;top:376px;">x</div>
<div class="b" style="left:1172px;top:369px;width:46px;height:27px;border:1px solid #d5d5d5;box-shadow:inset 0 0 0 1px #fff;background:#f0f0f0"></div>
<div class="t d" style="left:1175px;top:375px;">720</div>
<svg class="b" style="left:1229px;top:377px" width="20" height="12"><path d="M1 6H19M5 2L1 6L5 10M15 2L19 6L15 10" fill="none" stroke="#333" stroke-width="1.3"/></svg>
<div class="t u" style="left:1430px;top:376px;color:#6d6d6d"><span class="c">预览</span></div>
<div class="t d" style="left:932px;top:406px;"><span class="c">模式<span class="k">:</span></span></div>
<svg class="b" style="left:987px;top:404px" width="18" height="18"><circle cx="9" cy="9" r="8" fill="#fff" stroke="#cfcfcf" stroke-width="1"/><circle cx="9" cy="9" r="4.5" fill="#cccccc"/></svg>
<div class="t d" style="left:1013px;top:406px;"><span class="c">拉伸</span></div>
<svg class="b" style="left:1061px;top:404px" width="18" height="18"><circle cx="9" cy="9" r="8" fill="#fff" stroke="#cfcfcf" stroke-width="1"/></svg>
<div class="t d" style="left:1086px;top:406px;"><span class="c">裁切</span></div>
<svg class="b" style="left:1134px;top:404px" width="18" height="18"><circle cx="9" cy="9" r="8" fill="#fff" stroke="#cfcfcf" stroke-width="1"/></svg>
<div class="t d" style="left:1160px;top:406px;"><span class="c">原比例</span></div>
<div class="b" style="left:1232px;top:406px;width:15px;height:15px;border:1px solid #c6c6c6;background:#fff"></div>
<div class="t d" style="left:1257px;top:406px;"><span class="c">背景</span></div>
<div class="b" style="left:1299px;top:406px;width:15px;height:15px;border:1px solid #c6c6c6;background:#fff"></div>
<div class="t d" style="left:1324px;top:406px;"><span class="c">倒影</span></div>
<div class="b" style="left:1366px;top:400px;width:58px;height:27px;border:1px solid #b4b4b4;background:#fff"></div>
<div class="b" style="left:1369px;top:403px;width:32px;height:21px;border:1px solid #dadada;box-shadow:inset 0 0 0 1px #fff;background:#f0f0f0"></div>
<div class="b" style="left:1404px;top:403px;width:17px;height:21px;border:1px solid #e2e2e2;background:#f0f0f0"></div>
<div class="b" style="left:1404px;top:413px;width:19px;height:2px;background:#e2e2e2"></div>
<svg class="b" style="left:1408.5px;top:403px" width="10" height="23"><path d="M1 7.6L5 3.3L9 7.6Z" fill="#5a5a5a"/><path d="M1 15.0L5 19.2L9 15.0Z" fill="#5a5a5a"/></svg>
<div class="t " style="left:1372px;top:406px;color:#7d7d7d">0.5</div>
<svg class="b" style="left:1440px;top:407px" width="18" height="18"><circle cx="9" cy="9" r="7.6" fill="none" stroke="#b0b0b0" stroke-width="1" stroke-dasharray="3.2 0.8"/><text x="9" y="14" text-anchor="middle" font-family="Liberation Serif" font-weight="bold" font-size="13.5" fill="#4a4a4a">?</text></svg>
<div class="b" style="left:908px;top:432px;width:15px;height:15px;border:1px solid #333;background:#fff"></div>
<div class="t " style="left:932px;top:432px;color:#222"><span class="c">旋转</span>&amp;<span class="c">翻转</span></div>
<div class="t u" style="left:1430px;top:433px;color:#6d6d6d"><span class="c">预览</span></div>
<svg class="b" style="left:933px;top:456px" width="18" height="18"><circle cx="9" cy="9" r="8" fill="#fff" stroke="#cfcfcf" stroke-width="1"/><circle cx="9" cy="9" r="4.5" fill="#cccccc"/></svg>
<div class="t d" style="left:958px;top:457px;"><span class="c">左转</span>90<span class="c">度</span></div>
<svg class="b" style="left:1041px;top:456px" width="18" height="18"><circle cx="9" cy="9" r="8" fill="#fff" stroke="#cfcfcf" stroke-width="1"/></svg>
<div class="t d" style="left:1066px;top:457px;"><span class="c">右转</span>90<span class="c">度</span></div>
<svg class="b" style="left:1149px;top:456px" width="18" height="18"><circle cx="9" cy="9" r="8" fill="#fff" stroke="#cfcfcf" stroke-width="1"/></svg>
<div class="t d" style="left:1174px;top:457px;"><span class="c">水平翻转</span></div>
<svg class="b" style="left:1254px;top:455px" width="18" height="18"><circle cx="9" cy="9" r="8" fill="#fff" stroke="#cfcfcf" stroke-width="1"/></svg>
<div class="t d" style="left:1280px;top:457px;"><span class="c">垂直翻转</span></div>
<svg class="b" style="left:933px;top:484px" width="18" height="18"><circle cx="9" cy="9" r="8" fill="#fff" stroke="#cfcfcf" stroke-width="1"/></svg>
<div class="t d" style="left:958px;top:486px;"><span class="c">随机</span></div>
<div class="b" style="left:1009px;top:480px;width:69px;height:27px;border:1px solid #b4b4b4;background:#fff"></div>
<div class="b" style="left:1012px;top:483px;width:43px;height:21px;border:1px solid #dadada;box-shadow:inset 0 0 0 1px #fff;background:#f0f0f0"></div>
<div class="b" style="left:1058px;top:483px;width:17px;height:21px;border:1px solid #e2e2e2;background:#f0f0f0"></div>
<div class="b" style="left:1058px;top:493px;width:19px;height:2px;background:#e2e2e2"></div>
<svg class="b" style="left:1062.5px;top:483px" width="10" height="23"><path d="M1 7.6L5 3.3L9 7.6Z" fill="#5a5a5a"/><path d="M1 15.0L5 19.2L9 15.0Z" fill="#5a5a5a"/></svg>
<div class="t " style="left:1015px;top:486px;color:#7d7d7d">-1.0</div>
<div class="t d" style="left:1087px;top:486px;">-</div>
<div class="b" style="left:1100px;top:480px;width:69px;height:27px;border:1px solid #b4b4b4;background:#fff"></div>
<div class="b" style="left:1103px;top:483px;width:43px;height:21px;border:1px solid #dadada;box-shadow:inset 0 0 0 1px #fff;background:#f0f0f0"></div>
<div class="b" style="left:1149px;top:483px;width:17px;height:21px;border:1px solid #e2e2e2;background:#f0f0f0"></div>
<div class="b" style="left:1149px;top:493px;width:19px;height:2px;background:#e2e2e2"></div>
<svg class="b" style="left:1153.5px;top:483px" width="10" height="23"><path d="M1 7.6L5 3.3L9 7.6Z" fill="#5a5a5a"/><path d="M1 15.0L5 19.2L9 15.0Z" fill="#5a5a5a"/></svg>
<div class="t " style="left:1106px;top:486px;color:#7d7d7d">1.0</div>
<div class="b" style="left:1179px;top:486px;width:15px;height:15px;border:1px solid #c6c6c6;background:#fff"></div>
<div class="t d" style="left:1204px;top:486px;"><span class="c">完全显示</span></div>
<div class="b" style="left:1286px;top:486px;width:15px;height:15px;border:1px solid #c6c6c6;background:#fff"></div>
<svg class="b" style="left:1286px;top:486px" width="17" height="17"><path d="M3.5 8.5 L7 12 L13.5 4.5" fill="none" stroke="#c6c6c6" stroke-width="1.3"/></svg>
<div class="t d" style="left:1311px;top:486px;"><span class="c">黑边去除</span></div>
<svg class="b" style="left:1386px;top:486px" width="18" height="18"><circle cx="9" cy="9" r="7.6" fill="none" stroke="#b0b0b0" stroke-width="1" stroke-dasharray="3.2 0.8"/><text x="9" y="14" text-anchor="middle" font-family="Liberation Serif" font-weight="bold" font-size="13.5" fill="#4a4a4a">?</text></svg>
<div class="t " style="left:1382px;top:505px;color:#2b86d3"><span class="c">以下诸值<span class="k">,</span></span></div>
<div class="t " style="left:1301px;top:524px;color:#2b86d3"><span class="c">不同视频随机取值调整</span></div>
<div class="b" style="left:908px;top:522px;width:15px;height:15px;border:1px solid #333;background:#fff"></div>
<svg class="b" style="left:908px;top:522px" width="17" height="17"><path d="M3.5 8.5 L7 12 L13.5 4.5" fill="none" stroke="#222" stroke-width="1.3"/></svg>
<div class="t " style="left:932px;top:523px;color:#222"><span class="c">帧率设置</span></div>
<div class="b" style="left:1009px;top:517px;width:69px;height:27px;border:1px solid #b4b4b4;background:#fff"></div>
<div class="b" style="left:1012px;top:520px;width:43px;height:21px;border:1px solid #7a7a7a;background:#fff"></div>
<div class="b" style="left:1058px;top:520px;width:17px;height:21px;border:1px solid #cdcdcd;background:#e6e6e6"></div>
<div class="b" style="left:1058px;top:530px;width:19px;height:2px;background:#cdcdcd"></div>
<svg class="b" style="left:1062.5px;top:520px" width="10" height="23"><path d="M1 7.6L5 3.3L9 7.6Z" fill="#000"/><path d="M1 15.0L5 19.2L9 15.0Z" fill="#000"/></svg>
<div class="t " style="left:1015px;top:523px;color:#000">24.0</div>
<div class="t " style="left:1087px;top:523px;color:#222">-</div>
<div class="b" style="left:1100px;top:517px;width:69px;height:27px;border:1px solid #b4b4b4;background:#fff"></div>
<div class="b" style="left:1103px;top:520px;width:43px;height:21px;border:1px solid #7a7a7a;background:#fff"></div>
<div class="b" style="left:1149px;top:520px;width:17px;height:21px;border:1px solid #cdcdcd;background:#e6e6e6"></div>
<div class="b" style="left:1149px;top:530px;width:19px;height:2px;background:#cdcdcd"></div>
<svg class="b" style="left:1153.5px;top:520px" width="10" height="23"><path d="M1 7.6L5 3.3L9 7.6Z" fill="#000"/><path d="M1 15.0L5 19.2L9 15.0Z" fill="#000"/></svg>
<div class="t " style="left:1106px;top:523px;color:#000">30.0</div>
<div class="t d" style="left:1177px;top:523px;letter-spacing:0.9px">(12~120)</div>
<div class="b" style="left:908px;top:555px;width:15px;height:15px;border:1px solid #333;background:#fff"></div>
<div class="t " style="left:932px;top:555px;color:#222"><span class="c">抽帧</span> - <span class="c">每</span></div>
<div class="b" style="left:1009px;top:549px;width:69px;height:27px;border:1px solid #b4b4b4;background:#fff"></div>
<div class="b" style="left:1012px;top:552px;width:43px;height:21px;border:1px solid #dadada;box-shadow:inset 0 0 0 1px #fff;background:#f0f0f0"></div>
<div class="b" style="left:1058px;top:552px;width:17px;height:21px;border:1px solid #e2e2e2;background:#f0f0f0"></div>
<div class="b" style="left:1058px;top:562px;width:19px;height:2px;background:#e2e2e2"></div>
<svg class="b" style="left:1062.5px;top:552px" width="10" height="23"><path d="M1 7.6L5 3.3L9 7.6Z" fill="#5a5a5a"/><path d="M1 15.0L5 19.2L9 15.0Z" fill="#5a5a5a"/></svg>
<div class="t " style="left:1015px;top:555px;color:#7d7d7d">25</div>
<div class="t d" style="left:1087px;top:555px;">-</div>
<div class="b" style="left:1100px;top:549px;width:69px;height:27px;border:1px solid #b4b4b4;background:#fff"></div>
<div class="b" style="left:1103px;top:552px;width:43px;height:21px;border:1px solid #dadada;box-shadow:inset 0 0 0 1px #fff;background:#f0f0f0"></div>
<div class="b" style="left:1149px;top:552px;width:17px;height:21px;border:1px solid #e2e2e2;background:#f0f0f0"></div>
<div class="b" style="left:1149px;top:562px;width:19px;height:2px;background:#e2e2e2"></div>
<svg class="b" style="left:1153.5px;top:552px" width="10" height="23"><path d="M1 7.6L5 3.3L9 7.6Z" fill="#5a5a5a"/><path d="M1 15.0L5 19.2L9 15.0Z" fill="#5a5a5a"/></svg>
<div class="t " style="left:1106px;top:555px;color:#7d7d7d">30</div>
<div class="t d" style="left:1177px;top:556px;"><span class="c">帧抽一帧</span></div>
<svg class="b" style="left:1265px;top:556px" width="18" height="18"><circle cx="9" cy="9" r="7.6" fill="none" stroke="#b0b0b0" stroke-width="1" stroke-dasharray="3.2 0.8"/><text x="9" y="14" text-anchor="middle" font-family="Liberation Serif" font-weight="bold" font-size="13.5" fill="#4a4a4a">?</text></svg>
<div class="t u" style="left:1430px;top:557px;color:#6d6d6d"><span class="c">预览</span></div>
<div class="b" style="left:908px;top:587px;width:15px;height:15px;border:1px solid #333;background:#fff"></div>
<div class="t " style="left:932px;top:587px;color:#222"><span class="c">动态缩放</span></div>
<div class="b" style="left:1009px;top:581px;width:69px;height:27px;border:1px solid #b4b4b4;background:#fff"></div>
<div class="b" style="left:1012px;top:584px;width:43px;height:21px;border:1px solid #dadada;box-shadow:inset 0 0 0 1px #fff;background:#f0f0f0"></div>
<div class="b" style="left:1058px;top:584px;width:17px;height:21px;border:1px solid #e2e2e2;background:#f0f0f0"></div>
<div class="b" style="left:1058px;top:594px;width:19px;height:2px;background:#e2e2e2"></div>
<svg class="b" style="left:1062.5px;top:584px" width="10" height="23"><path d="M1 7.6L5 3.3L9 7.6Z" fill="#5a5a5a"/><path d="M1 15.0L5 19.2L9 15.0Z" fill="#5a5a5a"/></svg>
<div class="t " style="left:1015px;top:587px;color:#7d7d7d">0.01</div>
<div class="t d" style="left:1087px;top:587px;">-</div>
<div class="b" style="left:1100px;top:581px;width:69px;height:27px;border:1px solid #b4b4b4;background:#fff"></div>
<div class="b" style="left:1103px;top:584px;width:43px;height:21px;border:1px solid #dadada;box-shadow:inset 0 0 0 1px #fff;background:#f0f0f0"></div>
<div class="b" style="left:1149px;top:584px;width:17px;height:21px;border:1px solid #e2e2e2;background:#f0f0f0"></div>
<div class="b" style="left:1149px;top:594px;width:19px;height:2px;background:#e2e2e2"></div>
<svg class="b" style="left:1153.5px;top:584px" width="10" height="23"><path d="M1 7.6L5 3.3L9 7.6Z" fill="#5a5a5a"/><path d="M1 15.0L5 19.2L9 15.0Z" fill="#5a5a5a"/></svg>
<div class="t " style="left:1106px;top:587px;color:#7d7d7d">0.10</div>
<div class="t d" style="left:1177px;top:589px;letter-spacing:0.9px">(0.0~1.0)</div>
<svg class="b" style="left:1265px;top:589px" width="18" height="18"><circle cx="9" cy="9" r="7.6" fill="none" stroke="#b0b0b0" stroke-width="1" stroke-dasharray="3.2 0.8"/><text x="9" y="14" text-anchor="middle" font-family="Liberation Serif" font-weight="bold" font-size="13.5" fill="#4a4a4a">?</text></svg>
<div class="t u" style="left:1430px;top:589px;color:#6d6d6d"><span class="c">预览</span></div>
<div class="b" style="left:908px;top:619px;width:15px;height:15px;border:1px solid #333;background:#fff"></div>
<div class="t " style="left:932px;top:619px;color:#222"><span class="c">码率调整</span> - <span class="c">决定视频体积与清晰度</span></div>
<div class="t u" style="left:1397px;top:620px;color:#2d80c8"><span class="c">参数重置</span></div>
<svg class="b" style="left:933px;top:642px" width="18" height="18"><circle cx="9" cy="9" r="8" fill="#fff" stroke="#cfcfcf" stroke-width="1"/><circle cx="9" cy="9" r="4.5" fill="#cccccc"/></svg>
<div class="t d" style="left:958px;top:644px;"><span class="c">倍率</span></div>
<div class="b" style="left:1009px;top:638px;width:69px;height:27px;border:1px solid #b4b4b4;background:#fff"></div>
<div class="b" style="left:1012px;top:641px;width:43px;height:21px;border:1px solid #dadada;box-shadow:inset 0 0 0 1px #fff;background:#f0f0f0"></div>
<div class="b" style="left:1058px;top:641px;width:17px;height:21px;border:1px solid #e2e2e2;background:#f0f0f0"></div>
<div class="b" style="left:1058px;top:651px;width:19px;height:2px;background:#e2e2e2"></div>
<svg class="b" style="left:1062.5px;top:641px" width="10" height="23"><path d="M1 7.6L5 3.3L9 7.6Z" fill="#5a5a5a"/><path d="M1 15.0L5 19.2L9 15.0Z" fill="#5a5a5a"/></svg>
<div class="t " style="left:1015px;top:644px;color:#7d7d7d">1.05</div>
<div class="t d" style="left:1087px;top:644px;">-</div>
<div class="b" style="left:1100px;top:638px;width:69px;height:27px;border:1px solid #b4b4b4;background:#fff"></div>
<div class="b" style="left:1103px;top:641px;width:43px;height:21px;border:1px solid #dadada;box-shadow:inset 0 0 0 1px #fff;background:#f0f0f0"></div>
<div class="b" style="left:1149px;top:641px;width:17px;height:21px;border:1px solid #e2e2e2;background:#f0f0f0"></div>
<div class="b" style="left:1149px;top:651px;width:19px;height:2px;background:#e2e2e2"></div>
<svg class="b" style="left:1153.5px;top:641px" width="10" height="23"><path d="M1 7.6L5 3.3L9 7.6Z" fill="#5a5a5a"/><path d="M1 15.0L5 19.2L9 15.0Z" fill="#5a5a5a"/></svg>
<div class="t " style="left:1106px;top:644px;color:#7d7d7d">1.95</div>
<div class="t d" style="left:1177px;top:644px;letter-spacing:0.9px">(0.2~8.0)</div>
<svg class="b" style="left:1265px;top:644px" width="18" height="18"><circle cx="9" cy="9" r="7.6" fill="none" stroke="#b0b0b0" stroke-width="1" stroke-dasharray="3.2 0.8"/><text x="9" y="14" text-anchor="middle" font-family="Liberation Serif" font-weight="bold" font-size="13.5" fill="#4a4a4a">?</text></svg>
<svg class="b" style="left:933px;top:671px" width="18" height="18"><circle cx="9" cy="9" r="8" fill="#fff" stroke="#cfcfcf" stroke-width="1"/></svg>
<div class="t d" style="left:958px;top:675px;"><span class="c">定值</span></div>
<div class="b" style="left:1009px;top:669px;width:90px;height:27px;border:1px solid #d5d5d5;background:#fff"></div>
<div class="b" style="left:1013px;top:673px;width:61px;height:21px;background:#f0f0f0"></div>
<div class="t d" style="left:1014px;top:674px;">3000</div>
<svg class="b" style="left:1083px;top:680px" width="12" height="7"><path d="M0.5 0.5L6 6L11.5 0.5" fill="none" stroke="#999"/></svg>
<div class="t d" style="left:1108px;top:675px;">kb/s</div>
<div class="t " style="left:907px;top:713px;color:#222"><span class="c">输出位置<span class="k">:</span></span></div>
<div class="b" style="left:997px;top:707px;width:423px;height:27px;border:1px solid #7a7a7a;background:#fff"></div>
<div class="t " style="left:1001px;top:711px;color:#111">D:\CRVideoMate Output</div>
<div class="btn" style="left:1430px;top:708px;width:36px;height:28px;background:#e1e1e1"></div>
<div class="t " style="left:1440px;top:713px;color:#222">...</div>
<svg class="b" style="left:906px;top:760px" width="22" height="22"><g fill="none" stroke="#777" stroke-width="1.4"><circle cx="11" cy="11" r="3.5"/><path d="M9.3 1.5h3.4l.6 2.6 1.9.8 2.3-1.4 2.4 2.4-1.4 2.3.8 1.9 2.6.6v3.4l-2.6.6-.8 1.9 1.4 2.3-2.4 2.4-2.3-1.4-1.9.8-.6 2.6H9.3l-.6-2.6-1.9-.8-2.3 1.4-2.4-2.4 1.4-2.3-.8-1.9-2.6-.6V9.3l2.6-.6.8-1.9-1.4-2.3 2.4-2.4 2.3 1.4 1.9-.8z" transform="translate(11 11) scale(0.9) translate(-11 -11)"/></g></svg>
<div class="t u" style="left:933px;top:762px;color:#2d80c8"><span class="c">选项</span></div>
<div class="t u" style="left:977px;top:762px;color:#2d80c8"><span class="c">打开输出文件夹</span></div>
<div class="t " style="left:1115px;top:763px;color:#c8643a"><span class="c">裂变次数<span class="k">:</span></span></div>
<div class="b" style="left:1201px;top:755px;width:55px;height:27px;border:1px solid #b4b4b4;background:#fff"></div>
<div class="b" style="left:1204px;top:758px;width:29px;height:21px;border:1px solid #7a7a7a;background:#fff"></div>
<div class="b" style="left:1236px;top:758px;width:17px;height:21px;border:1px solid #cdcdcd;background:#e6e6e6"></div>
<div class="b" style="left:1236px;top:768px;width:19px;height:2px;background:#cdcdcd"></div>
<svg class="b" style="left:1240.5px;top:758px" width="10" height="23"><path d="M1 7.6L5 3.3L9 7.6Z" fill="#000"/><path d="M1 15.0L5 19.2L9 15.0Z" fill="#000"/></svg>
<div class="t " style="left:1207px;top:761px;color:#000">1</div>
<svg class="b" style="left:1267px;top:760px" width="18" height="18"><circle cx="9" cy="9" r="7.6" fill="none" stroke="#b0b0b0" stroke-width="1" stroke-dasharray="3.2 0.8"/><text x="9" y="14" text-anchor="middle" font-family="Liberation Serif" font-weight="bold" font-size="13.5" fill="#4a4a4a">?</text></svg>
<div class="btn" style="left:1307px;top:745px;width:159px;height:40px;background:#e1e1e1"></div>
<div class="t " style="left:1347px;top:752px;color:#4a78ad;font-size:20.6px;line-height:24px;height:24px"><span class="c">开始处理</span></div>
<div class="b" style="left:7px;top:806px;width:1465px;height:74px;border:1px solid #dcdcdc"></div>
<div class="t " style="left:14px;top:798px;background:#f0f0f0;color:#222">&nbsp;<span class="c">处理记录</span>&nbsp;</div>
<div class="t " style="left:19px;top:821px;color:#222">16:30:47 -&gt; <span class="c">软件启动</span></div>
<div class="b" style="left:1443px;top:818px;width:1px;height:58px;background:#fff"></div>
<svg class="b" style="left:1449px;top:826px" width="12" height="44"><path d="M1 9L6 3L11 9M1 36L6 42L11 36" fill="none" stroke="#c2c2c2" stroke-width="1.6"/></svg>
<div class="b" style="left:0px;top:892px;width:1481px;height:1px;background:#fff"></div>
<div class="t " style="left:4px;top:899px;color:#222"><span class="c">版本<span class="k">:</span></span>1.6.5.2</div>
<div class="b" style="left:155px;top:896px;width:1px;height:23px;background:#a0a0a0"></div>
<div class="t " style="left:161px;top:899px;color:#222">D:\ApowerREC\20240520_130206 xload<span class="c">后半段</span>.mov</div>
<div class="b" style="left:897px;top:896px;width:1px;height:23px;background:#a0a0a0"></div>
<div class="b" style="left:900px;top:896px;width:129px;height:20px;border:1px solid #bcbcbc;background:#e6e6e6"></div>
<div class="b" style="left:1152px;top:896px;width:1px;height:23px;background:#a0a0a0"></div>
<div class="b" style="left:1437px;top:896px;width:1px;height:23px;background:#a0a0a0"></div>
<svg class="b" style="left:1442px;top:899px" width="32" height="18"><path d="M1.5 1.5H14.5V16.5H1.5Z" fill="#fff" stroke="#444"/><path d="M4 5H5M7 5H12M4 8H5M7 8H12M4 11H5M7 11H12M4 14H5M7 14H12" stroke="#444"/><path d="M22 7H29L25.5 11Z" fill="#111"/></svg>
<div class="b" style="left:413px;top:338px;width:195px;height:424px;box-shadow:2px 2px 4px 1px rgba(0,0,0,0.28)"></div>
<div class="b" style="left:412px;top:337px;width:195px;height:424px;border:1px solid #a9a9a9;background:#fbfbfb"></div>
<div class="b" style="left:413px;top:338px;width:31px;height:424px;background:#f0f0f0"></div>
<div class="t " style="left:459px;top:344px;color:#2a2a2a"><span class="c">播放</span></div>
<div class="t " style="left:459px;top:374px;color:#2a2a2a"><span class="c">打开文件夹</span></div>
<div class="t " style="left:459px;top:412px;color:#2a2a2a"><span class="c">字幕</span></div>
<svg class="b" style="left:588px;top:415px" width="7" height="10"><path d="M0 0L6 5L0 10Z" fill="#111"/></svg>
<div class="t " style="left:459px;top:441px;color:#2a2a2a"><span class="c">封面</span></div>
<svg class="b" style="left:588px;top:444px" width="7" height="10"><path d="M0 0L6 5L0 10Z" fill="#111"/></svg>
<div class="t " style="left:459px;top:471px;color:#2a2a2a"><span class="c">独立功能</span></div>
<svg class="b" style="left:588px;top:474px" width="7" height="10"><path d="M0 0L6 5L0 10Z" fill="#111"/></svg>
<div class="t " style="left:459px;top:508px;color:#2a2a2a"><span class="c">全选</span></div>
<div class="t " style="left:517px;top:508px;color:#2a2a2a">Ctrl+A</div>
<div class="t " style="left:459px;top:537px;color:#2a2a2a"><span class="c">反选</span></div>
<div class="t " style="left:459px;top:575px;color:#2a2a2a"><span class="c">移除</span></div>
<div class="t " style="left:517px;top:575px;color:#2a2a2a">Delete</div>
<div class="t " style="left:459px;top:604px;color:#2a2a2a"><span class="c">清空</span></div>
<div class="t " style="left:459px;top:633px;color:#a0a0a0"><span class="c">清除无效文件</span></div>
<div class="t " style="left:459px;top:670px;color:#2a2a2a"><span class="c">插队</span></div>
<div class="t " style="left:459px;top:700px;color:#2a2a2a"><span class="c">排序</span></div>
<svg class="b" style="left:588px;top:703px" width="7" height="10"><path d="M0 0L6 5L0 10Z" fill="#111"/></svg>
<div class="t " style="left:459px;top:737px;color:#2a2a2a"><span class="c">媒体信息</span></div>
<div class="b" style="left:455px;top:402px;width:152px;height:1px;background:#d5d5d5"></div>
<div class="b" style="left:455px;top:498px;width:152px;height:1px;background:#d5d5d5"></div>
<div class="b" style="left:455px;top:565px;width:152px;height:1px;background:#d5d5d5"></div>
<div class="b" style="left:455px;top:661px;width:152px;height:1px;background:#d5d5d5"></div>
<div class="b" style="left:455px;top:728px;width:152px;height:1px;background:#d5d5d5"></div>
<div class="t " style="left:418px;top:412px;color:#7a7a7a;font-size:15px">CC</div>
<div class="t " style="left:418px;top:441px;color:#7a7a7a;font-size:15px">FC</div>
<svg class="b" style="left:418px;top:573px" width="20" height="20"><g stroke="#333" stroke-linecap="round"><path d="M2 2.3L10 10" stroke-width="2.4"/><path d="M10 10L18 18.5" stroke-width="1.2"/><path d="M3.5 17.5L10 10" stroke-width="2.7"/><path d="M10 10L18 2.5" stroke-width="1.2"/></g></svg>
<svg class="b" style="left:423px;top:669px" width="12" height="18"><path d="M6 17V2M1.5 6.5L6 2L10.5 6.5" fill="none" stroke="#333" stroke-width="1.3"/></svg>
<svg class="b" style="left:418px;top:735px" width="21" height="21"><circle cx="10.5" cy="10.5" r="9.3" fill="none" stroke="#555" stroke-width="1.3"/><path d="M10.5 8.5V16" stroke="#555" stroke-width="1.8"/><circle cx="10.5" cy="5.5" r="1.2" fill="#555"/></svg>
<svg class="b" style="left:424px;top:336px" width="20" height="28"><path d="M1 1V21L5.5 16.8L9 25L12 23.7L8.6 15.7H14.6Z" fill="#fff" stroke="#111" stroke-width="1.2" stroke-linejoin="miter"/></svg>
</div></body></html>
